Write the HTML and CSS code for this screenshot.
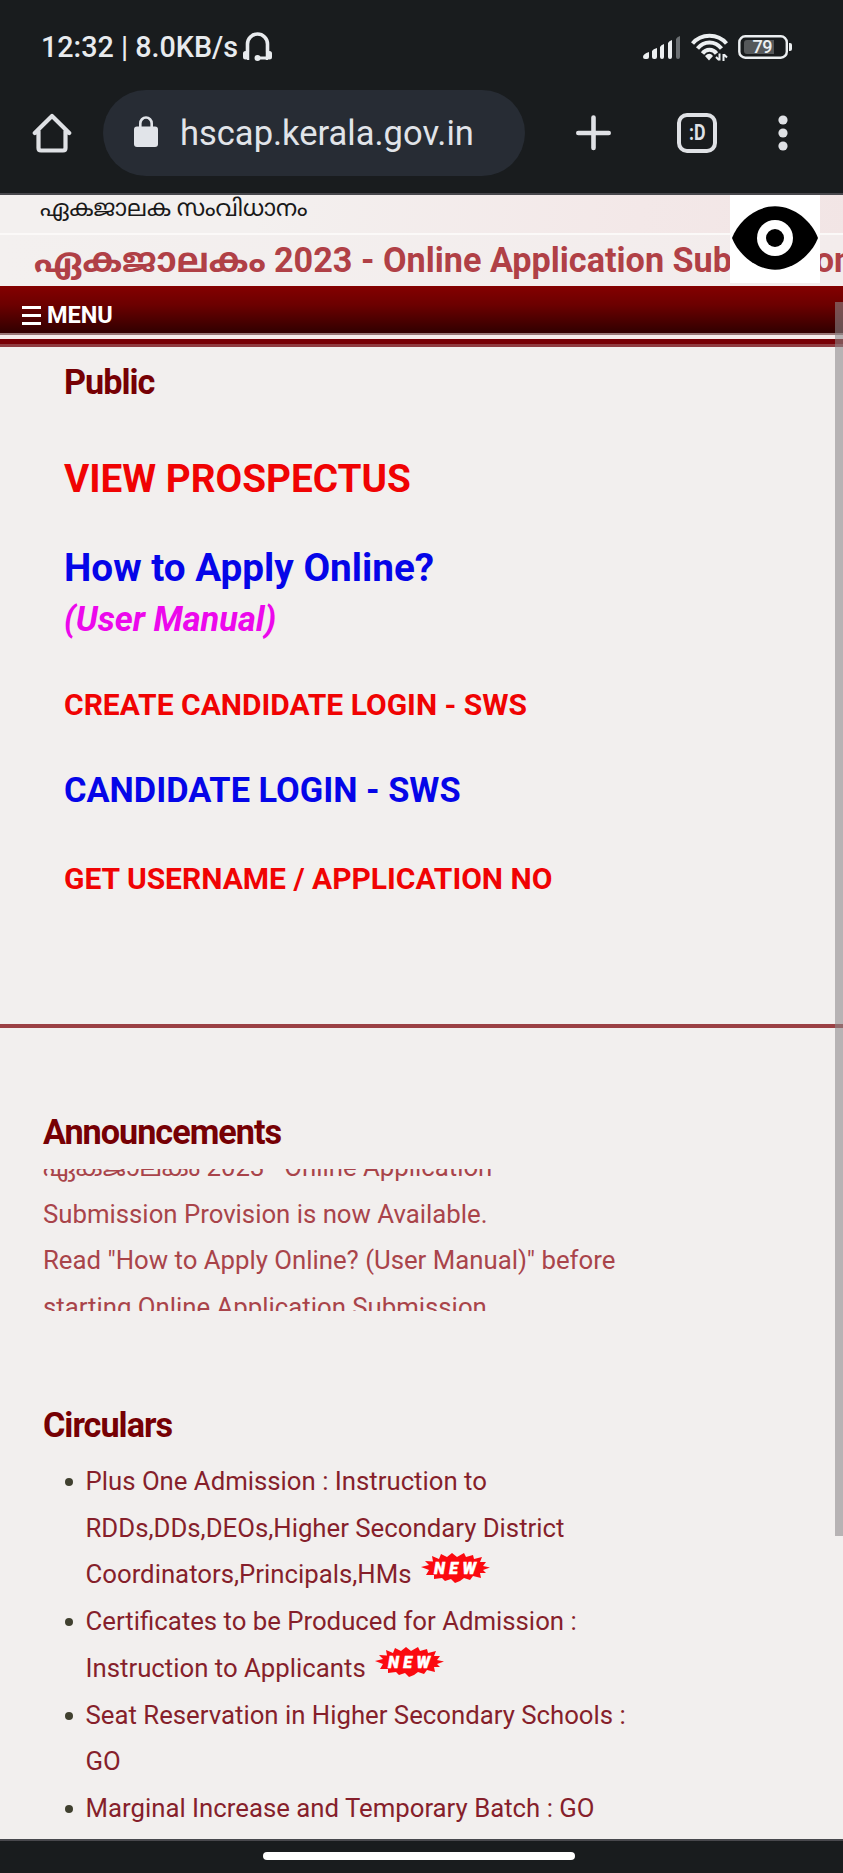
FILE: index.html
```html
<!DOCTYPE html>
<html lang="en">
<head>
<meta charset="utf-8">
<title>HSCAP Kerala</title>
<link rel="stylesheet" href="styles.css">
</head>
<body>
<svg class="defs" width="0" height="0">
  <defs>
    <symbol id="new-badge" viewBox="0 0 70 31">
      <path fill="#fb0a10" d="M1 15 L9 13 L5 9 L13 9.500 L12 4 L19 7 L21 2 L27 5 L32 1 L37 5 L44 1 L46 5 L53 3 L54 7 L62 5 L60 10 L66 10 L63 14 L70 15.500 L63 18 L66 21 L60 21 L61 26 L53 24 L50 28 L44 26 L40 29 L35 31 L31 27 L25 29 L22 26 L14 27 L14 23 L6 23 L9 18 Z"/>
      <text x="14" y="21.500" textLength="42" lengthAdjust="spacing" class="badge-text">NEW</text>
    </symbol>
  </defs>
</svg>
<div class="phone">
  <header class="chrome">
    <div class="status">
      <span class="clock">12:32 | 8.0KB/s</span>
      <svg class="headset" width="31" height="30" viewBox="0 0 31 30" fill="none" stroke="#e8ebee" stroke-width="3.600">
        <path d="M5.500 20V12a10 10 0 0 1 20 0V20"/>
        <path stroke-width="5" stroke-linecap="round" d="M3.500 21.500V25M27.500 21.500V25"/>
        <path stroke-width="2.500" d="M6 20V28M25 20V28"/>
        <path stroke-width="3" d="M15 26H25"/>
        <circle cx="15.500" cy="26" r="3" fill="#e8ebee" stroke="none"/>
      </svg>
      <svg class="signal" width="38" height="25" viewBox="0 0 38 25" fill="#eceff1">
        <path d="M0 22q0-3 6-5v5q0 2-2 2H2q-2 0-2-2z"/>
        <path d="M9 16q1-2 5-3v9q0 2-2 2h-1q-2 0-2-2z"/>
        <path d="M17 12q1-2 4-3v13q0 2-2 2t-2-2z"/>
        <path d="M25 8q1-2 4-3v17q0 2-2 2t-2-2z"/>
        <path fill="#6b6f72" d="M33 4q1-2 4-3v21q0 2-2 2t-2-2z"/>
      </svg>
      <svg class="wifi" width="37" height="28" viewBox="0 0 37 28" fill="none" stroke="#eceff1" stroke-width="4">
        <path d="M1.500 10.500C10 0 27 0 35.500 10.500"/>
        <path d="M6.500 15.500C13 7.500 24 7.500 30.500 15.500"/>
        <path d="M11.500 20.500C15 15.500 22 15.500 25.500 20.500"/>
        <path fill="#eceff1" stroke="none" d="M14 23q4.500-4.500 8 0l-4 4.500z"/>
        <path stroke-width="2" d="M28.500 20.500v7M25 24l3 3M32.500 28v-7M36 24.500l-3-3"/>
      </svg>
      <svg class="battery" width="55" height="24" viewBox="0 0 55 24">
        <rect x="1.300" y="1.300" width="47.500" height="21.400" rx="6" fill="none" stroke="#eceff1" stroke-width="2.400"/>
        <path fill="#55585a" d="M9 5H36V19H9q-3 0-3-3V8q0-3 3-3z"/>
        <path fill="#eceff1" d="M51 8h1q2 0 2 2v4q0 2-2 2h-1z"/>
        <text class="battery-text" x="14.500" y="18" textLength="20">79</text>
      </svg>
    </div>
    <div class="toolbar">
      <svg class="home" width="40" height="40" viewBox="0 0 40 40" fill="none" stroke="#dfe1e5" stroke-width="4.200" stroke-linejoin="round" stroke-linecap="round">
        <path d="M2.800 20L20 3L37.200 20M6.500 18V35q0 2.500 2.500 2.500H31q2.500 0 2.500-2.500V18"/>
      </svg>
      <div class="omnibox">
        <svg class="lock" width="24" height="31" viewBox="0 0 24 31">
          <rect y="10.500" width="24" height="20.500" rx="3" fill="#e1e4e9"/>
          <path d="M6.300 12V7.500a5.700 6 0 0 1 11.400 0V12" fill="none" stroke="#e1e4e9" stroke-width="2.600"/>
        </svg>
        <span class="url">hscap.kerala.gov.in</span>
      </div>
      <svg class="plus" width="35" height="36" viewBox="0 0 35 36" stroke="#dfe1e5" stroke-width="4.600" stroke-linecap="round">
        <path d="M17.500 2.500V33M2.300 18H32.700"/>
      </svg>
      <div class="tabs"><svg width="20" height="28" viewBox="0 0 20 28"><text class="tabs-text" x="2" y="21" textLength="16.500" lengthAdjust="spacingAndGlyphs">:D</text></svg></div>
      <svg class="dots" width="10" height="36" viewBox="0 0 10 36" fill="#dfe1e5">
        <circle cx="5" cy="5" r="4.600"/><circle cx="5" cy="18" r="4.600"/><circle cx="5" cy="31" r="4.600"/>
      </svg>
    </div>
  </header>

  <main class="site">
    <div class="banner">
      <div class="tagline">ഏകജാലക സംവിധാനം</div>
      <div class="ticker"><span class="ticker-ml">ഏകജാലകം</span><span class="ticker-en">2023 - Online Application Submission</span></div>
      <div class="eye">
        <svg width="90" height="88" viewBox="0 0 90 88">
          <path d="M2 43C8 27 25 11.300 45 11.300S82 27 88 43C82 59 64 74.700 45 74.700S8 59 2 43Z"/>
          <circle cx="45" cy="43" r="18" fill="#fff"/>
          <circle cx="45" cy="43" r="9"/>
        </svg>
      </div>
    </div>
    <nav class="menu">
      <svg width="19" height="19" viewBox="0 0 19 19" fill="#fff"><path d="M0 0h19v3H0zM0 8h19v3H0zM0 16h19v3H0z"/></svg>
      <span class="menu-label">MENU</span>
    </nav>
    <div class="menu-rule"></div>

    <section class="public">
      <h2 class="public-title">Public</h2>
      <a class="link prospectus">VIEW PROSPECTUS</a>
      <a class="link howto">How to Apply Online?</a>
      <a class="link manual">(User Manual)</a>
      <a class="link create">CREATE CANDIDATE LOGIN - SWS</a>
      <a class="link login">CANDIDATE LOGIN - SWS</a>
      <a class="link username">GET USERNAME / APPLICATION NO</a>
    </section>

    <section class="news">
      <h2 class="news-title">Announcements</h2>
      <div class="marquee">
        <div class="row row-first"><span class="row-ml">ഏകജാലകം</span><span class="row-en">2023 - Online Application</span></div>
        <div class="row">Submission Provision is now Available.</div>
        <div class="row">Read "How to Apply Online? (User Manual)" before</div>
        <div class="row">starting Online Application Submission</div>
      </div>
      <h2 class="news-title circulars-title">Circulars</h2>
      <ul class="circulars">
        <li>Plus One Admission : Instruction to<br>RDDs,DDs,DEOs,Higher Secondary District<br>Coordinators,Principals,HMs<svg class="badge" width="70" height="31"><use href="#new-badge"/></svg></li>
        <li>Certificates to be Produced for Admission :<br>Instruction to Applicants<svg class="badge" width="70" height="31"><use href="#new-badge"/></svg></li>
        <li>Seat Reservation in Higher Secondary Schools :<br>GO</li>
        <li>Marginal Increase and Temporary Batch : GO</li>
      </ul>
    </section>
    <div class="scrollbar"></div>
  </main>

  <footer class="gesture"><div class="handle"></div></footer>
</div>
</body>
</html>
```
FILE: styles.css
```css
* { box-sizing: border-box; }
body { margin: 0; background: #f2efee; font-family: Roboto, "Noto Sans Malayalam", "Noto Sans", sans-serif; }
.defs { position: absolute; }
.phone { width: 843px; height: 1873px; display: flex; flex-direction: column; overflow: hidden; }
svg { display: block; flex: none; }

.chrome { height: 195px; flex: none; background: #191c1e; border-bottom: 2px solid #48484d; }
.status { height: 89px; padding: 32px 50px 0 41px; display: flex; align-items: flex-start; color: #e8ebee; }
.clock { font-size: 28.700px; font-weight: 500; line-height: 31px; width: 200px; white-space: nowrap; }
.headset { margin-left: 1px; }
.signal { margin: 3px 0 0 auto; }
.wifi { margin: 1px 0 0 10px; }
.battery { margin: 3px 0 0 10px; }
.battery-text { font-size: 18px; font-weight: 500; fill: #eceff1; }

.toolbar { height: 87px; display: flex; align-items: center; padding-left: 32px; }
.omnibox { width: 422px; height: 86px; margin-left: 31px; border-radius: 43px; background: #272c34; display: flex; align-items: center; padding-left: 31px; }
.lock { margin-bottom: 2px; }
.url { margin-left: 22px; font-size: 34.500px; line-height: 40px; color: #e1e4e9; white-space: nowrap; }
.plus { margin-left: 51px; }
.tabs { width: 40px; height: 40px; margin-left: 66px; border: 4px solid #dfe1e5; border-radius: 10px; display: flex; align-items: center; justify-content: center; }
.tabs-text { font-size: 22px; font-weight: 700; fill: #dfe1e5; }
.dots { margin-left: 61px; }

.site { position: relative; flex: none; height: 1644px; overflow: hidden; background: #f2efee; }
.banner { position: relative; height: 91px; background: linear-gradient(100deg, #f3f0ef 30%, #f3e8e8 75%, #f2e5e5); overflow: hidden; }
.tagline { height: 40px; padding-left: 40px; border-bottom: 2px solid #fbf9f8; font-size: 23.200px; line-height: 27px; color: #191919; white-space: nowrap; }
.ticker { height: 51px; padding-left: 34px; background: linear-gradient(90deg, #f3f0ef, #f3ecec); display: flex; font-size: 34.200px; line-height: 51px; font-weight: 700; color: #b04046; white-space: nowrap; }
.ticker-ml { flex: none; width: 240px; font-size: 34.400px; }
.ticker-en { flex: none; }
.eye { position: absolute; left: 730px; top: 0; width: 90px; height: 88px; background: #fff; }
.menu { height: 47px; padding: 11px 0 0 22px; display: flex; align-items: center; gap: 6px; background: linear-gradient(#840000, #6c0000 40%, #350000 95%); color: #fff; }
.menu-label { font-size: 23.500px; font-weight: 700; line-height: 30px; }
.menu-rule { height: 14px; background: linear-gradient(#977 0 2px, #f5eceb 2px 6px, #780006 6px 11px, #903b40 11px 14px); }

.public { height: 681px; padding: 15px 0 0 64px; border-bottom: 4px solid #9b4044; display: flex; flex-direction: column; align-items: flex-start; }
h2 { margin: 0; color: #760004; font-weight: 700; }
.public-title { font-size: 34.200px; line-height: 40px; letter-spacing: -1px; }
.link { display: block; font-weight: 700; white-space: nowrap; line-height: 40px; }
.prospectus { font-size: 38.700px; margin-top: 57px; color: #f00303; }
.howto { font-size: 38.700px; margin-top: 49px; color: #0505e8; }
.manual { font-size: 34.400px; margin-top: 11px; font-style: italic; color: #ec08ec; }
.create { font-size: 30px; margin-top: 46px; color: #f00303; }
.login { font-size: 34.400px; margin-top: 45px; color: #0505e8; }
.username { font-size: 30px; margin-top: 49px; color: #f00303; }

.news { padding: 84px 0 0 43px; }
.news-title { font-size: 34.200px; line-height: 40px; letter-spacing: -1px; }
.marquee { height: 142px; margin-top: 17px; overflow: hidden; color: #a9444a; font-size: 25.760px; }
.row { height: 46.700px; line-height: 46.700px; white-space: nowrap; }
.row-first { margin-top: -25px; display: flex; }
.row-ml { width: 163.500px; }
.circulars-title { margin-top: 94px; }
.circulars { margin: 13px 0 0; padding-left: 42.500px; list-style: none; font-size: 25.760px; line-height: 46.700px; color: #861f2b; white-space: nowrap; }
.circulars li::before { content: ""; display: inline-block; width: 8px; height: 8px; margin: 0 13px 0 -21px; border-radius: 50%; background: #40402f; vertical-align: 4px; }
.badge { display: inline-block; height: 31px; margin: -10px 0 0 8px; vertical-align: 0; }
.badge-text { font: italic 900 16px Roboto, sans-serif; fill: #fff; stroke: #fff; stroke-width: .5px; }
.scrollbar { position: absolute; right: 0; top: 107px; width: 8px; height: 1234px; background: rgba(140, 136, 138, .58); }

.gesture { flex: 1; background: #191c1e; border-top: 2px solid #48484d; }
.handle { width: 312px; height: 8px; margin: 11px 0 0 263px; border-radius: 4px; background: #fff; }
```
